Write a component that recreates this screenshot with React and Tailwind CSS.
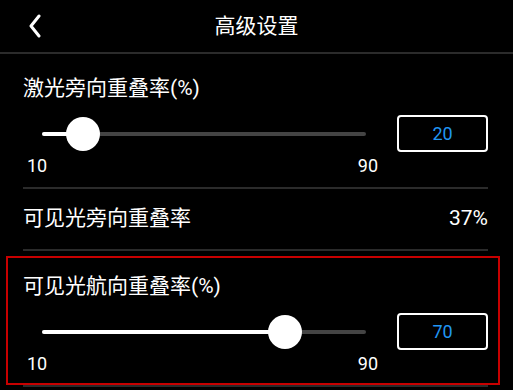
import React from "react";

function Slider({ value, min = 10, max = 90 }) {
  const pct = ((value - min) / (max - min)) * 100;
  return (
    <div className="relative ml-[19px] w-[324px] h-[36px] flex items-center">
      <div className="relative w-full h-[4px] rounded-full bg-[#444444]">
        <div className="absolute left-0 top-0 h-full rounded-full bg-white" style={{ width: `${pct}%` }} />
      </div>
      <div
        className="absolute top-1/2 w-[34px] h-[34px] -translate-x-1/2 -translate-y-1/2 rounded-full bg-white"
        style={{ left: `${pct}%` }}
      />
    </div>
  );
}

function SliderBlock({ title, value }) {
  return (
    <div>
      <div className="h-[28px] leading-[28px] text-[21px] text-white">{title}</div>
      <div className="mt-[13px] flex items-center">
        <Slider value={value} />
        <div className="ml-auto w-[91px] h-[37px] border-2 border-white rounded-[4px] flex items-center justify-center text-[18px] text-[#2196f3]">
          {value}
        </div>
      </div>
      <div className="mt-[4px] ml-[4px] w-[351px] h-[20px] leading-[20px] flex justify-between text-[18px] text-white">
        <span>10</span>
        <span>90</span>
      </div>
    </div>
  );
}

export default function App() {
  return (
    <div className="w-[513px] h-[390px] bg-black overflow-hidden font-[Roboto,'Noto_Sans_CJK_SC',sans-serif] text-white">
      <div className="h-[54px] border-b-2 border-[#2b2b2b] grid grid-cols-[1fr_auto_1fr] items-center">
        <div className="pl-[28px] flex items-center">
          <svg width="14" height="24" viewBox="0 0 14 24" fill="none">
            <path d="M11 2 L3 12 L11 22" stroke="white" strokeWidth="3" strokeLinecap="round" strokeLinejoin="round" />
          </svg>
        </div>
        <div className="text-[21px] leading-[28px] text-white">高级设置</div>
        <div />
      </div>

      <div className="pl-[23px] pr-[25px]">
        <div className="pt-[20px] pb-[11px]">
          <SliderBlock title="激光旁向重叠率(%)" value={20} />
        </div>
        <div className="border-t-2 border-[#2b2b2b] h-[64px] border-b-2 flex items-center justify-between text-[21px]">
          <span>可见光旁向重叠率</span>
          <span>37%</span>
        </div>
      </div>

      <div className="mt-[5px] ml-[6px] mr-[13px] h-[129px] border-2 border-[#c80000] pl-[15px] pr-[10px] pt-[14px]">
        <SliderBlock title="可见光航向重叠率(%)" value={70} />
      </div>
      <div className="ml-[23px] mr-[25px] border-t-2 border-[#2b2b2b]" />
    </div>
  );
}
